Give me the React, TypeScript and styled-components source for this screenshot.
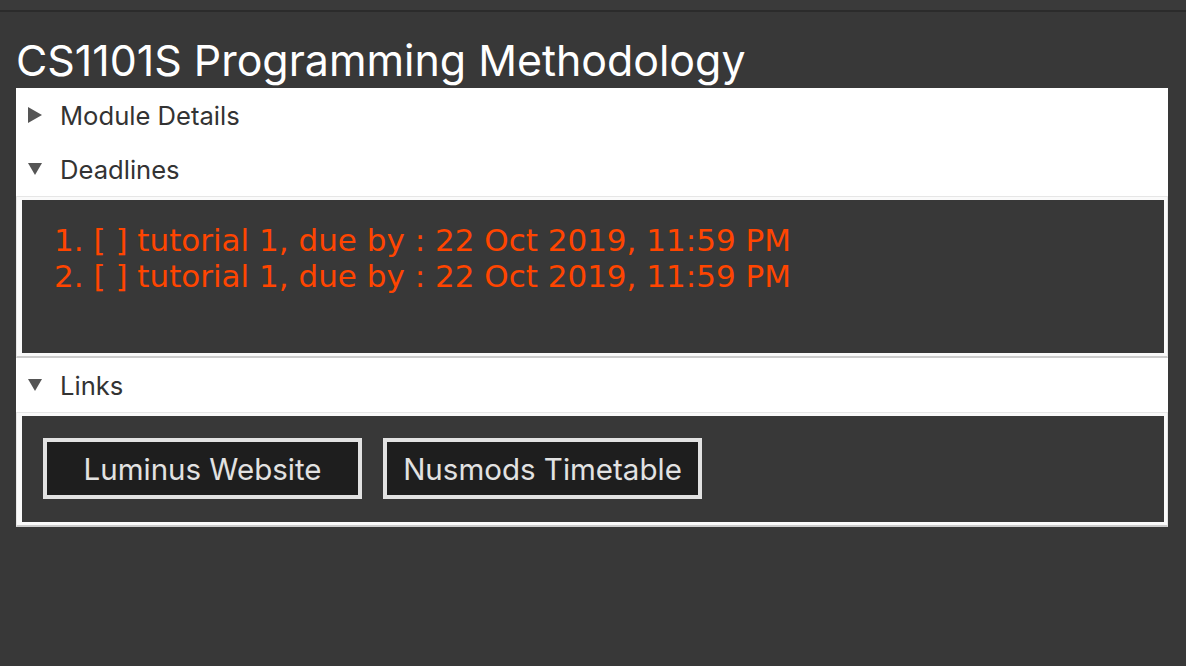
import React from "react";
import styled, { createGlobalStyle } from "styled-components";

const Global = createGlobalStyle`
  html, body { margin: 0; padding: 0; background: #383838; }
  body { font-family: Inter, "Liberation Sans", sans-serif; }
`;

const Page = styled.div`
  width: 1186px;
  height: 666px;
  background: #383838;
  display: flex;
  flex-direction: column;
  overflow: hidden;
`;

const TopBar = styled.div`
  height: 10px;
  background: #3a3a3a;
  border-bottom: 2px solid #2b2b2b;
`;

const Title = styled.h1`
  margin: 0;
  padding: 0 0 2px 16px;
  height: 74px;
  display: flex;
  align-items: flex-end;
  font-family: Inter, "Liberation Sans", sans-serif;
  font-weight: 400;
  font-size: 42.9px;
  line-height: 52px;
  color: #ffffff;
`;

const Panel = styled.div`
  margin: 0 18px 0 16px;
  background: #ffffff;
  display: flex;
  flex-direction: column;
`;

const Header = styled.div`
  height: 54px;
  display: flex;
  align-items: center;
  padding-left: 10px;
  font-size: 25.6px;
  color: #333333;
`;

const Arrow = styled.span`
  width: 18px;
  display: inline-flex;
  justify-content: center;
  margin-right: 16px;
  svg { display: block; }
`;

const ContentBox = styled.div<{ $h: number }>`
  height: ${(p) => p.$h}px;
  box-sizing: border-box;
  border-top: 1px solid #e6e6e6;
  border-left: 1px solid #e6e6e6;
  border-right: 1px solid #e6e6e6;
  border-bottom: 2px solid #cccccc;
  padding: 3px 3px 3px 5px;
  background: #fafafa;
  display: flex;
`;

const Inner = styled.div<{ $pad: string }>`
  flex: 1;
  background: #383838;
  padding: ${(p) => p.$pad};
  box-sizing: border-box;
`;

const DeadlineList = styled.div`
  font-family: "DejaVu Sans", Verdana, sans-serif;
  font-size: 31px;
  line-height: 36px;
  color: #ff4500;
`;

const ButtonRow = styled.div`
  display: flex;
  gap: 21px;
`;

const LinkButton = styled.button`
  width: 319px;
  height: 61px;
  box-sizing: border-box;
  background: #1e1e1e;
  border: 4px solid #e2e2e2;
  color: #e2e2e2;
  font-family: Inter, "Liberation Sans", sans-serif;
  font-size: 29.5px;
  padding: 0;
  cursor: pointer;
`;

const RightTri = () => (
  <svg width="14" height="16" viewBox="0 0 14 16">
    <polygon points="0,0 14,8 0,16" fill="#555555" />
  </svg>
);
const DownTri = () => (
  <svg width="14" height="12" viewBox="0 0 14 12">
    <polygon points="0,0 14,0 7,12" fill="#555555" />
  </svg>
);

export default function App() {
  return (
    <Page>
      <Global />
      <TopBar />
      <Title>CS1101S Programming Methodology</Title>
      <Panel>
        <Header>
          <Arrow><RightTri /></Arrow>Module Details
        </Header>
        <Header>
          <Arrow><DownTri /></Arrow>Deadlines
        </Header>
        <ContentBox $h={162}>
          <Inner $pad="22px 0 0 32px">
            <DeadlineList>
              <div>1. [ ] tutorial 1, due by : 22 Oct 2019, 11:59 PM</div>
              <div>2. [ ] tutorial 1, due by : 22 Oct 2019, 11:59 PM</div>
            </DeadlineList>
          </Inner>
        </ContentBox>
        <Header>
          <Arrow><DownTri /></Arrow>Links
        </Header>
        <ContentBox $h={115}>
          <Inner $pad="22px 0 0 21px">
            <ButtonRow>
              <LinkButton>Luminus Website</LinkButton>
              <LinkButton>Nusmods Timetable</LinkButton>
            </ButtonRow>
          </Inner>
        </ContentBox>
      </Panel>
    </Page>
  );
}
